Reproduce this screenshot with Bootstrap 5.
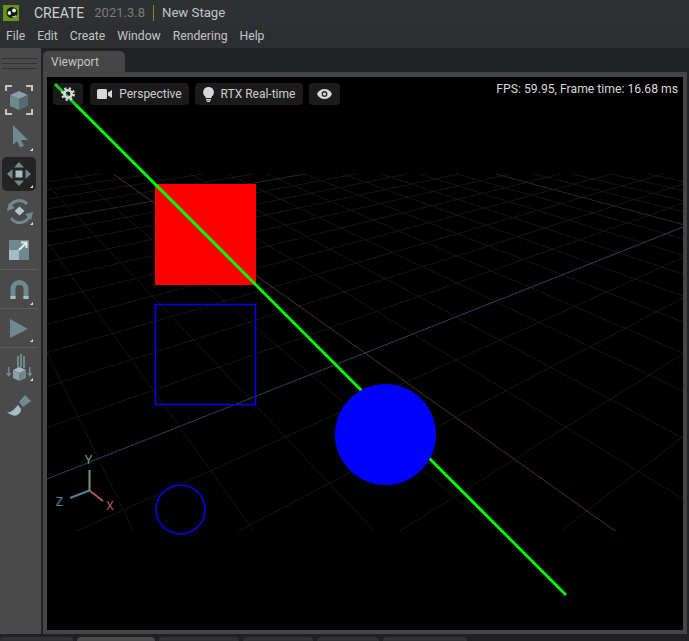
<!DOCTYPE html>
<html lang="en">

<head>
    <meta charset="UTF-8" />
    <meta name="viewport" content="width=device-width, initial-scale=1.0" />
    <title>CREATE - New Stage</title>
    <link href="https://cdn.jsdelivr.net/npm/bootstrap@5.3.2/dist/css/bootstrap.min.css" rel="stylesheet" />
    <style>
        html, body {
            height: 100%;
            overflow: hidden;
        }

        body {
            background-color: #1f2124;
            color: #c8c8c8;
            font-family: Roboto, "Liberation Sans", sans-serif;
            font-size: 12px;
            line-height: 1;
        }

        .app-shell {
            width: 689px;
            height: 641px;
        }

        .title-strip {
            height: 25px;
            background-color: #2f3032;
            font-size: 13.200px;
        }

        .logo-box {
            width: 16px;
            height: 16px;
            margin: 0 15px 0 3px;
        }

        .title-app { color: #c9cfd3; font-size: 14px; }
        .title-ver { color: #7c7c7c; margin-left: 10px; font-size: 13px; }
        .title-bar { width: 1px; height: 16px; background-color: #6f8f2a; margin: 0 8px; }
        .title-stage { color: #c0c4c8; }

        .menu-strip {
            height: 23px;
            background-color: #2c2e31;
            padding-left: 6px;
            gap: 12px;
            color: #c4c4c4;
            font-size: 12.200px;
        }

        .work-row {
            height: 586px;
        }

        .side-tools {
            width: 41px;
            background-color: #4a4a4a;
        }

        .grip-lines {
            height: 11px;
            margin: 10px 4px 14px 2px;
            border-top: 1px solid #333;
            border-bottom: 1px solid #333;
            position: relative;
        }

        .grip-lines::after {
            content: "";
            position: absolute;
            left: 0;
            right: 0;
            top: 4px;
            border-top: 1px solid #333;
        }

        .tool-slot {
            width: 34px;
            height: 34px;
            margin: 0 0 3px 2px;
            border-radius: 5px;
        }

        .tool-slot svg { display: block; overflow: visible; }
        .tool-on { background-color: #242424; }
        .slot-short { height: 32px; }

        .tool-sep {
            height: 1px;
            background-color: #5c5c5c;
            margin: 0 3px 3px 0;
        }

        .view-col {
            width: 644px;
            margin-left: 2px;
        }

        .tab-row {
            height: 24px;
            padding-top: 3px;
        }

        .view-tab {
            width: 82px;
            background-color: #454545;
            border-radius: 5px 5px 0 0;
            padding: 5px 0 0 8px;
            color: #c4c4c4;
        }

        .view-frame {
            height: 562px;
            background-color: #454545;
            padding: 5px 4px 4px 4px;
        }

        .canvas-box {
            height: 553px;
            width: 636px;
            background-color: #000;
            position: relative;
            overflow: hidden;
        }

        .canvas-box > svg { position: absolute; left: 0; top: 0; }

        .overlay-bar {
            position: absolute;
            left: 6px;
            top: 6px;
            gap: 6px;
        }

        .overlay-btn {
            height: 22px;
            background-color: rgba(90, 90, 90, 0.3);
            border-radius: 4px;
            color: #cfcfcf;
            gap: 7px;
        }

        .btn-gear { width: 30px; margin-right: 1px; }
        .btn-persp { width: 99px; }
        .btn-rtx { width: 108px; }
        .btn-eye { width: 31px; }

        .fps-label {
            position: absolute;
            right: 5px;
            top: 6px;
            color: #d8d8d8;
            font-size: 12.200px;
        }

        .dock-tabs {
            height: 7px;
            padding-top: 3px;
            gap: 4px;
        }

        .dock-tab {
            height: 10px;
            background-color: #303236;
            border-radius: 4px 4px 0 0;
        }

        .dock-on { background-color: #4a4a4a; }
        .dt-1 { width: 73px; }
        .dt-2 { width: 78px; }
        .dt-3 { width: 80px; }
        .dt-4 { width: 70px; }
        .dt-5 { width: 62px; }
        .dt-6 { width: 84px; }
    </style>
</head>

<body>
    <div class="app-shell d-flex flex-column">
        <div class="title-strip d-flex align-items-center">
            <svg class="logo-box" viewBox="0 0 16 16">
                <rect width="16" height="16" fill="#5f9a12" />
                <circle cx="9" cy="7.500" r="5.500" fill="#161616" />
                <path d="M4.500 8C5.500 5 8 5.500 8 8s-2.500 3-3.500 0Z" fill="#eee" />
                <circle cx="11" cy="5.500" r="2" fill="#eee" />
                <path d="M9 11c2 .5 3 0 4-1l.5 1.500c-1.500 1.500-3 1.500-4.500.5Z" fill="#bbb" />
            </svg>
            <span class="title-app">CREATE</span>
            <span class="title-ver">2021.3.8</span>
            <span class="title-bar"></span>
            <span class="title-stage">New Stage</span>
        </div>

        <div class="menu-strip d-flex align-items-center">
            <span>File</span><span>Edit</span><span>Create</span><span>Window</span><span>Rendering</span><span>Help</span>
        </div>

        <div class="work-row d-flex">
            <div class="side-tools flex-shrink-0">
                <div class="grip-lines"></div>

                <div class="tool-slot"><svg width="34" height="34" viewBox="0 0 34 34">
                    <path d="M4 8V3h6M24 3h6v5M4 26v5h6M24 31h6v-5" fill="none" stroke="#c4c4c4" stroke-width="2" />
                    <path d="M17 8l9 4-9 4-9-4z" fill="#8ba0a6" />
                    <path d="M8 12l9 4v11l-9-4z" fill="#6f888e" />
                    <path d="M26 12l-9 4v11l9-4z" fill="#56696e" />
                </svg></div>

                <div class="tool-slot"><svg width="34" height="34" viewBox="0 0 34 34">
                    <path d="M11 5l15 15h-7l3 6-4 1.500-3-6.500-4 4z" fill="#6f8a8e" />
                    <path d="M31 31v-3l-3 3z" fill="#ddd" />
                </svg></div>

                <div class="tool-slot tool-on"><svg width="34" height="34" viewBox="0 0 34 34">
                    <rect x="13.500" y="13.500" width="7" height="7" fill="#a4bcc4" />
                    <path d="M17 5l5 5.500h-10zM17 29l5-5.500h-10zM5 17l5.500-5v10zM29 17l-5.500-5v10z" fill="#6f8a8e" />
                    <path d="M31 31v-3l-3 3z" fill="#ddd" />
                </svg></div>

                <div class="tool-slot"><svg width="34" height="34" viewBox="0 0 34 34">
                    <path d="M7 15a10.500 10.500 0 0 1 18-5" fill="none" stroke="#6f8a8e" stroke-width="3" />
                    <path d="M28 20a10.500 10.500 0 0 1-19 4" fill="none" stroke="#6f8a8e" stroke-width="3" />
                    <path d="M7 9l6 5-8 3zM29 26l-6-6 8-2z" fill="#6f8a8e" />
                    <path d="M17.500 12.500l5 4.500-5 4.500-5-4.500z" fill="#b4c6cc" />
                    <path d="M31 31v-3l-3 3z" fill="#ddd" />
                </svg></div>

                <div class="tool-slot mb-1"><svg width="34" height="34" viewBox="0 -4 34 34">
                    <rect x="7" y="5" width="20" height="20" rx="1" fill="#6f8a8e" />
                    <rect x="7" y="15" width="10" height="10" fill="#a4bcc4" />
                    <path d="M17 15l7-7M19 7.500h5.500v5.500" fill="none" stroke="#e4e8ea" stroke-width="2" />
                </svg></div>

                <div class="tool-sep"></div>

                <div class="tool-slot slot-short"><svg width="34" height="34" viewBox="0 -3 34 34">
                    <path d="M11 23V13a6.500 6.500 0 0 1 13 0v10" fill="none" stroke="#6f8a8e" stroke-width="5" />
                    <path d="M8.500 20h5v3h-5zM21.500 20h5v3h-5z" fill="#a4bcc4" />
                    <path d="M31 29v-3l-3 3z" fill="#ddd" />
                </svg></div>

                <div class="tool-sep"></div>

                <div class="tool-slot slot-short"><svg width="34" height="34" viewBox="0 -3 34 34">
                    <path d="M8 4l18 10-18 9z" fill="#6f8a8e" />
                    <path d="M31 27v-3l-3 3z" fill="#ddd" />
                </svg></div>

                <div class="tool-sep"></div>

                <div class="tool-slot"><svg width="34" height="34" viewBox="0 -3 34 34">
                    <path d="M15 2h2v12h-2zM18 0h2v13h-2zM21 2h2v12h-2z" fill="#6f8a8e" />
                    <path d="M17.500 13l6.500 3-6.500 3-6.500-3z" fill="#a4bcc4" />
                    <path d="M11 16l6.500 3v8l-6.500-3z" fill="#8ba0a6" />
                    <path d="M24 16l-6.500 3v8l6.500-3z" fill="#6f8a8e" />
                    <path d="M6 13h1.500v6h2l-2.750 4-2.750-4h2zM27 13h1.500v6h2l-2.750 4-2.750-4h2z" fill="#6f8a8e" />
                    <path d="M31 27v-3l-3 3z" fill="#ddd" />
                </svg></div>

                <div class="tool-slot"><svg width="34" height="34" viewBox="0 -3 34 34">
                    <path d="M23 4l6 6-8 6-4-5z" fill="#6f8a8e" />
                    <path d="M5 21c5 1 8-4 11-7l3 4c0 5-5 8-9 6-2-.5-4-2-5-3z" fill="#a4bcc4" />
                </svg></div>
            </div>

            <div class="view-col flex-shrink-0">
                <div class="tab-row d-flex">
                    <div class="view-tab">Viewport</div>
                </div>
                <div class="view-frame">
                    <div class="canvas-box">
                        <svg width="636" height="553" viewBox="47 77 636 553">
                            <defs>
                                <clipPath id="grid-clip"><rect x="47" y="174" width="636" height="357" /></clipPath>
                            </defs>
                            <g id="grid-lines" clip-path="url(#grid-clip)"></g>
                            <rect x="155" y="184" width="101" height="101" fill="#f00" />
                            <rect x="155.500" y="304.500" width="100" height="100" fill="none" stroke="#00f" stroke-width="1.500" />
                            <line x1="55" y1="84" x2="566" y2="595" stroke="#0f0" stroke-width="3" />
                            <circle cx="385.500" cy="434.500" r="50.500" fill="#00f" />
                            <circle cx="180.500" cy="509.500" r="24.500" fill="none" stroke="#00f" stroke-width="1.500" />
                            <line x1="89.500" y1="490.500" x2="89.500" y2="470" stroke="#6f9a72" stroke-width="2" />
                            <line x1="89.500" y1="490.500" x2="70" y2="498" stroke="#4f80a2" stroke-width="2" />
                            <line x1="89.500" y1="490.500" x2="103" y2="501" stroke="#a85a58" stroke-width="2" />
                            <text x="88.500" y="464" text-anchor="middle" font-size="12.500" fill="#6f9a72">Y</text>
                            <text x="59.500" y="506" text-anchor="middle" font-size="12.500" fill="#4f80a2">Z</text>
                            <text x="110" y="510" text-anchor="middle" font-size="12.500" fill="#a85a58">X</text>
                        </svg>

                        <div class="overlay-bar d-flex">
                            <div class="overlay-btn btn-gear d-flex align-items-center justify-content-center">
                                <svg width="16" height="16" viewBox="0 0 16 16">
                                    <circle cx="8" cy="8" r="3.700" fill="none" stroke="#d8d8d8" stroke-width="2.600" />
                                    <circle cx="8" cy="8" r="5.800" fill="none" stroke="#d8d8d8" stroke-width="2.200" stroke-dasharray="2.300 2.250" />
                                </svg>
                            </div>
                            <div class="overlay-btn btn-persp d-flex align-items-center justify-content-center">
                                <svg width="15" height="12" viewBox="0 0 15 12">
                                    <rect x="0" y="1" width="10" height="10" rx="1.500" fill="#d8d8d8" />
                                    <path d="M11 4.500l4-2.500v8l-4-2.500z" fill="#d8d8d8" />
                                </svg>
                                <span>Perspective</span>
                            </div>
                            <div class="overlay-btn btn-rtx d-flex align-items-center justify-content-center">
                                <svg width="11" height="15" viewBox="0 0 11 15">
                                    <path d="M5.500 0a5.300 5.300 0 0 0-3 9.700V11h6V9.700a5.300 5.300 0 0 0-3-9.700z" fill="#d8d8d8" />
                                    <rect x="3" y="12" width="5" height="1.500" fill="#d8d8d8" />
                                    <rect x="4" y="14" width="3" height="1" fill="#d8d8d8" />
                                </svg>
                                <span>RTX Real-time</span>
                            </div>
                            <div class="overlay-btn btn-eye d-flex align-items-center justify-content-center">
                                <svg width="15" height="10" viewBox="0 0 15 10">
                                    <path d="M0 5c3-6.600 12-6.600 15 0-3 6.600-12 6.600-15 0z" fill="#d8d8d8" />
                                    <circle cx="7.500" cy="5" r="2.900" fill="#2a2a2a" />
                                    <circle cx="7.500" cy="5" r="1.600" fill="#d8d8d8" />
                                </svg>
                            </div>
                        </div>

                        <div class="fps-label">FPS: 59.95, Frame time: 16.68 ms</div>
                    </div>
                </div>
            </div>
        </div>

        <div class="dock-tabs d-flex overflow-hidden">
            <div class="dock-tab dt-1"></div>
            <div class="dock-tab dt-2 dock-on"></div>
            <div class="dock-tab dt-3"></div>
            <div class="dock-tab dt-4"></div>
            <div class="dock-tab dt-5"></div>
            <div class="dock-tab dt-6"></div>
        </div>
    </div>

    <script>
        // floor grid: two vanishing points on the horizon, worked out from the axes
        const origin = [365, 353];
        const farX = [-120, 8];
        const farZ = [1236, 8];
        const stepX = 0.0785;
        const stepZ = 0.0586;

        function project(x, z) {
            const a = x * stepX;
            const b = z * stepZ;
            const w = 1 + a + b;
            return [
                (origin[0] + a * farX[0] + b * farZ[0]) / w,
                (origin[1] + a * farX[1] + b * farZ[1]) / w
            ];
        }

        function addLine(p, q, color) {
            const line = document.createElementNS('http://www.w3.org/2000/svg', 'line');
            line.setAttribute('x1', p[0]);
            line.setAttribute('y1', p[1]);
            line.setAttribute('x2', q[0]);
            line.setAttribute('y2', q[1]);
            line.setAttribute('stroke', color);
            document.getElementById('grid-lines').appendChild(line);
        }

        function gridColor(i) {
            if (i === 0) return null;
            return i % 10 === 0 ? '#282828' : '#161616';
        }

        for (let i = -40; i <= 40; i++) {
            const color = gridColor(i);
            if (!color) continue;
            // keep w between 0.5 and 2.5, the clip rectangle cuts off the rest
            addLine(project(i, (-0.5 - i * stepX) / stepZ), project(i, (1.5 - i * stepX) / stepZ), color);
            addLine(project((-0.5 - i * stepZ) / stepX, i), project((1.5 - i * stepZ) / stepX, i), color);
        }

        addLine(project(0, -8.5), project(0, 25), '#264558');
        addLine(project(-6.4, 0), project(19, 0), '#4e302e');
    </script>
    <script src="https://cdn.jsdelivr.net/npm/bootstrap@5.3.2/dist/js/bootstrap.bundle.min.js"></script>
</body>

</html>
